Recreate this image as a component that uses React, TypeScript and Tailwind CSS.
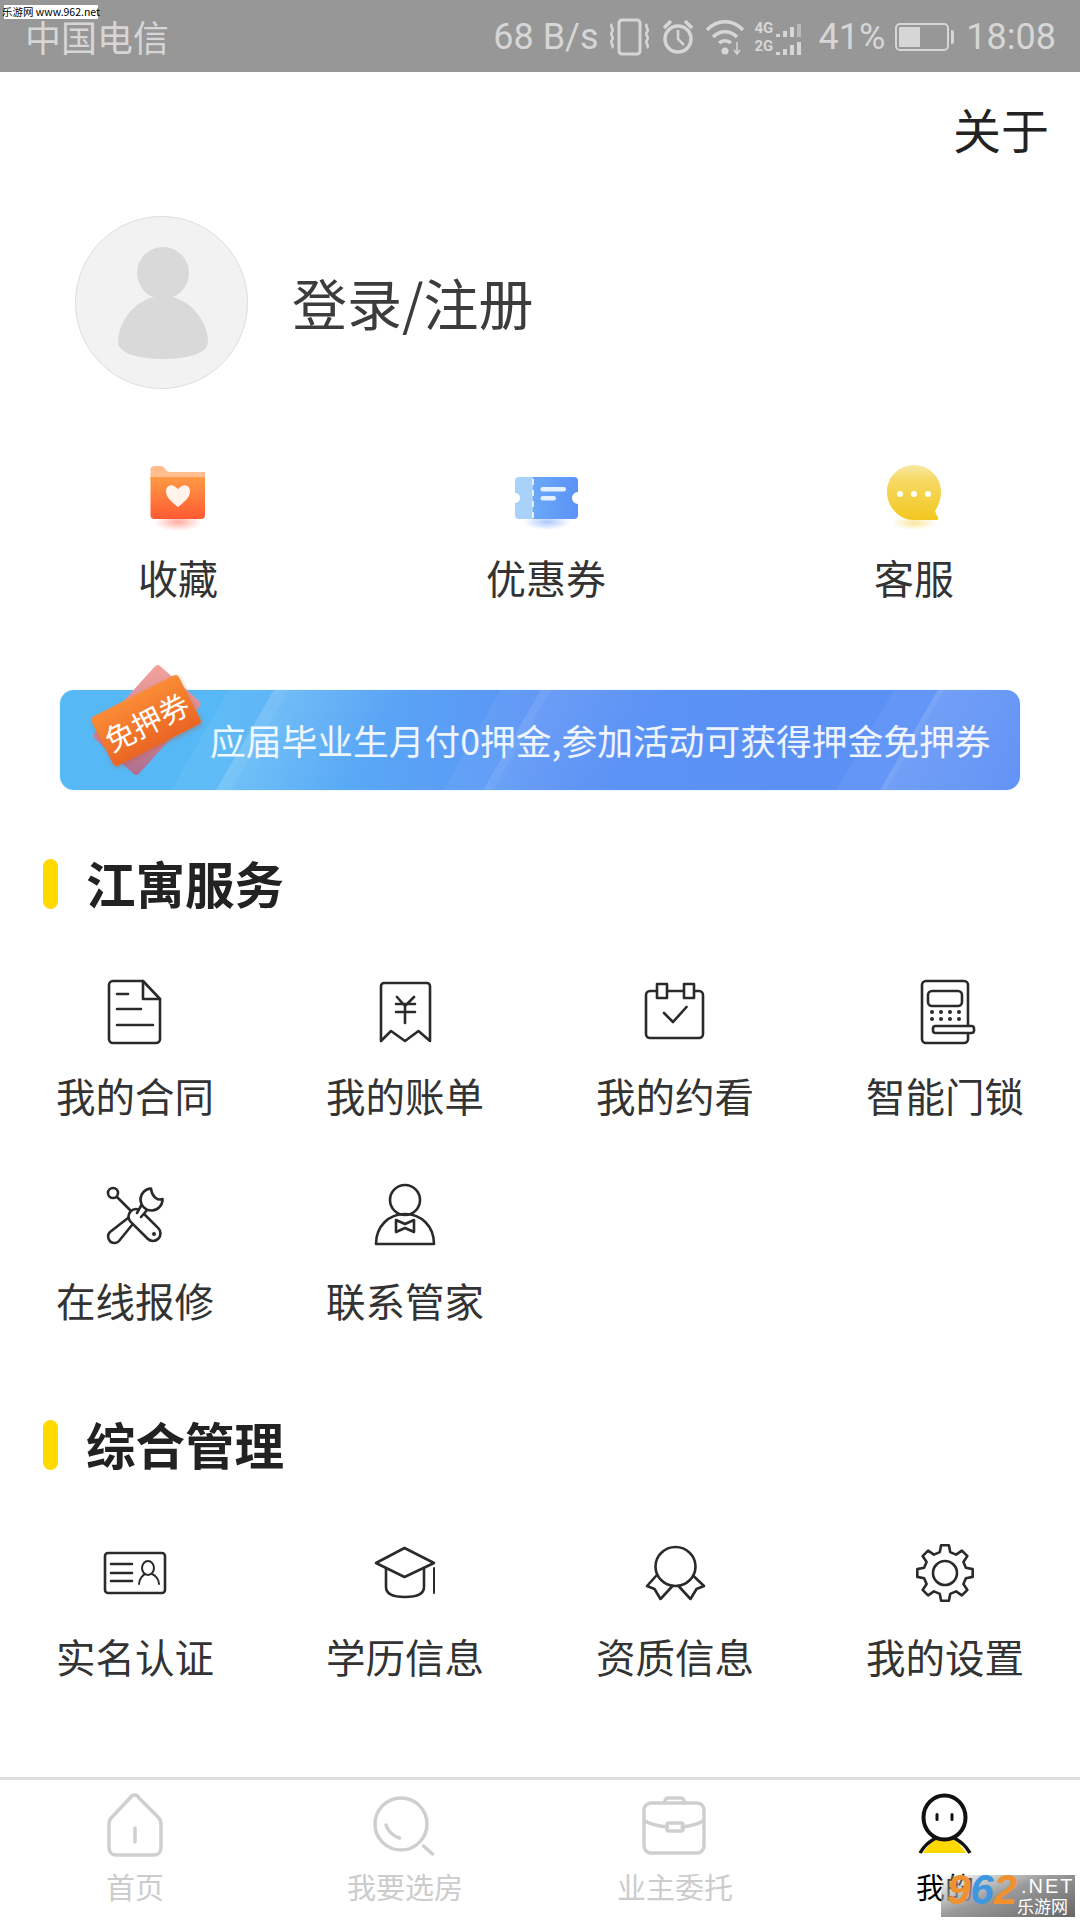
const cjk = "font-['Noto_Sans_CJK_SC','Roboto',sans-serif]";

const gearPath = () => {
  const pts: string[] = [];
  for (let i = 0; i < 8; i++) {
    const a = i * 45 - 90;
    const list: [number, number][] = [
      [21.5, a - 14],
      [28, a - 8],
      [28, a + 8],
      [21.5, a + 14],
    ];
    list.forEach(([r, deg]) => {
      const rad = (deg * Math.PI) / 180;
      pts.push(`${(35 + r * Math.cos(rad)).toFixed(1)} ${(32 + r * Math.sin(rad)).toFixed(1)}`);
    });
  }
  return `M${pts.join("L")}Z`;
};

const Line = ({ children, viewBox = "0 0 70 70" }: { children: React.ReactNode; viewBox?: string }) => (
  <svg width="70" height="70" viewBox={viewBox} fill="none" stroke="#2a2a2a" strokeWidth="2.6" strokeLinejoin="round" strokeLinecap="round">
    {children}
  </svg>
);

const icons: Record<string, React.ReactNode> = {
  contract: (
    <Line>
      <path d="M13 4H43L60 22V62a4 4 0 0 1-4 4H13a4 4 0 0 1-4-4V8a4 4 0 0 1 4-4Z" />
      <path d="M43 4V22H60M17 17H28M17 32H41M17 48H53" />
    </Line>
  ),
  bill: (
    <Line>
      <path d="M11 64V9a3 3 0 0 1 3-3H57a3 3 0 0 1 3 3V64L48.5 54L35 64L21 54Z" />
      <path d="M27 20L35 29L44 20M26 27H45M26 35H45M35 29V46" />
    </Line>
  ),
  calendar: (
    <Line>
      <rect x="6" y="14" width="57" height="47" rx="4" />
      <rect x="17" y="7" width="10" height="14" fill="#fff" />
      <rect x="44" y="7" width="10" height="14" fill="#fff" />
      <path d="M24 36L33 45L46.5 30" />
    </Line>
  ),
  lock: (
    <Line>
      <path d="M16 4H54a4 4 0 0 1 4 4V62a4 4 0 0 1-4 4H16a4 4 0 0 1-4-4V8a4 4 0 0 1 4-4Z" />
      <rect x="18" y="14" width="34" height="15" rx="4" />
      <g fill="#2a2a2a" stroke="none">
        <circle cx="22" cy="35" r="2" />
        <circle cx="31" cy="35" r="2" />
        <circle cx="40" cy="35" r="2" />
        <circle cx="49" cy="35" r="2" />
        <circle cx="22" cy="42" r="2" />
        <circle cx="31" cy="42" r="2" />
        <circle cx="40" cy="42" r="2" />
        <circle cx="49" cy="42" r="2" />
      </g>
      <rect x="23" y="49" width="41" height="7" rx="2.5" fill="#fff" />
    </Line>
  ),
  repair: (
    <Line>
      <circle cx="13" cy="11" r="5" />
      <path d="M17 15L30 28" />
      <path d="M28 36L10 50a6.500 6.500 0 0 0 5 11a6 6 0 0 0 4-2L32 43" />
      <rect x="25" y="35.500" width="39" height="15" rx="7.500" transform="rotate(45 44.500 43)" fill="#fff" />
      <path d="M37 31L42 22L48 27L41 35" fill="#fff" />
      <path d="M51 6.500A11 11 0 1 0 62.500 17C58 19 52 15 51 6.500Z" fill="#fff" />
      <circle cx="54" cy="52" r="2" fill="#2a2a2a" stroke="none" />
    </Line>
  ),
  butler: (
    <Line>
      <circle cx="35" cy="18" r="15" />
      <path d="M6 62C6 44 19 32 35 32C51 32 64 44 64 62Z" />
      <path d="M26 38L35 42L44 38V50L35 46L26 50Z" />
    </Line>
  ),
  idcard: (
    <Line viewBox="0 -3 70 70">
      <rect x="5" y="12" width="60" height="40" rx="3" />
      <path d="M11 23H32M11 32H32M11 40H32" />
      <ellipse cx="48" cy="27" rx="6" ry="7" strokeWidth="2" />
      <path d="M39 43C39 38 43 34 45 33M59 43C59 38 55 34 52 33" strokeWidth="2" />
    </Line>
  ),
  cap: (
    <Line viewBox="0 -3 70 70">
      <path d="M34.500 7L64 22L34.500 36L6 22Z" />
      <path d="M16 27V46C16 53 24 56 35 56C46 56 54 53 54 46V27" />
      <path d="M64 27V52" strokeWidth="2" />
    </Line>
  ),
  medal: (
    <Line viewBox="0 -3 70 70">
      <ellipse cx="35.500" cy="25.500" rx="20" ry="19.500" />
      <path d="M16 35L7 45L14.500 48L20.500 58L32.500 45" />
      <path d="M53.500 35L64 45L56.500 48L50.500 58L38.500 45" />
    </Line>
  ),
  gear: (
    <Line viewBox="0 -3 70 70">
      <path d={gearPath()} />
      <circle cx="35" cy="32" r="12" />
    </Line>
  ),
};

const services = [
  { key: "contract", label: "我的合同" },
  { key: "bill", label: "我的账单" },
  { key: "calendar", label: "我的约看" },
  { key: "lock", label: "智能门锁" },
  { key: "repair", label: "在线报修" },
  { key: "butler", label: "联系管家" },
];

const manage = [
  { key: "idcard", label: "实名认证" },
  { key: "cap", label: "学历信息" },
  { key: "medal", label: "资质信息" },
  { key: "gear", label: "我的设置" },
];

const FolderIcon = () => (
  <svg width="90" height="80" viewBox="0 0 90 80">
    <defs>
      <linearGradient id="folderBody" x1="0" y1="0" x2="0" y2="1">
        <stop offset="0" stopColor="#ff9a45" />
        <stop offset="1" stopColor="#ff5a32" />
      </linearGradient>
      <radialGradient id="folderShadow">
        <stop offset="0" stopColor="#ff6a50" stopOpacity="0.55" />
        <stop offset="1" stopColor="#ff6a50" stopOpacity="0" />
      </radialGradient>
    </defs>
    <ellipse cx="45" cy="62" rx="24" ry="9" fill="url(#folderShadow)" />
    <path d="M17.500 10a4 4 0 0 1 4-4H28C32 6 33 12 36 12H72V20H17.500Z" fill="#ffbd90" />
    <path d="M17.500 17H72V55a4 4 0 0 1-4 4H21.500a4 4 0 0 1-4-4Z" fill="url(#folderBody)" />
    <path d="M45 47C36 40 33 36 33 31C33 26 38 24 41 26C43 27 45 29 45 29C45 29 47 27 49 26C52 24 57 26 57 31C57 36 54 40 45 47Z" fill="#fff3ec" />
  </svg>
);

const TicketIcon = () => (
  <svg width="90" height="80" viewBox="0 0 90 80">
    <defs>
      <linearGradient id="ticketBody" x1="0" y1="0" x2="1" y2="0">
        <stop offset="0" stopColor="#6aa8f6" />
        <stop offset="1" stopColor="#5b93f8" />
      </linearGradient>
      <radialGradient id="ticketShadow">
        <stop offset="0" stopColor="#5b8ff5" stopOpacity="0.5" />
        <stop offset="1" stopColor="#5b8ff5" stopOpacity="0" />
      </radialGradient>
    </defs>
    <ellipse cx="46" cy="62" rx="24" ry="8" fill="url(#ticketShadow)" />
    <path d="M18 17H32V59H18a4 4 0 0 1-4-4V43a5 5 0 0 0 0-10V21a4 4 0 0 1 4-4Z" fill="#a9d2fb" />
    <path d="M32 17H73a4 4 0 0 1 4 4V32a6 6 0 0 0 0 12V55a4 4 0 0 1-4 4H32Z" fill="url(#ticketBody)" />
    <path d="M32 19V59" stroke="#fff" strokeWidth="1.500" strokeDasharray="6 5" />
    <rect x="39.500" y="27" width="25.500" height="4.500" rx="2.200" fill="#e6f0ff" />
    <rect x="39.500" y="36" width="15.500" height="4.500" rx="2.200" fill="#e6f0ff" />
  </svg>
);

const ChatIcon = () => (
  <svg width="90" height="80" viewBox="0 0 90 80">
    <defs>
      <linearGradient id="chatBody" x1="0" y1="0" x2="0" y2="1">
        <stop offset="0" stopColor="#fae8a5" />
        <stop offset="0.25" stopColor="#f6da66" />
        <stop offset="1" stopColor="#f2c71f" />
      </linearGradient>
      <radialGradient id="chatShadow">
        <stop offset="0" stopColor="#f2c71f" stopOpacity="0.45" />
        <stop offset="1" stopColor="#f2c71f" stopOpacity="0" />
      </radialGradient>
    </defs>
    <ellipse cx="45" cy="63" rx="22" ry="7" fill="url(#chatShadow)" />
    <path d="M45 5C60 5 72 17 72 32C72 39 70 45 66 51C67 54 68 56 69 57C70 59 69 60 67 60H45C30 60 18 47 18 32C18 17 30 5 45 5Z" fill="url(#chatBody)" />
    <circle cx="31" cy="34" r="3" fill="#fff" />
    <circle cx="45" cy="34" r="3" fill="#fff" />
    <circle cx="59" cy="34" r="3" fill="#fff" />
  </svg>
);

const SectionTitle = ({ title }: { title: string }) => (
  <div className="flex h-[50px] items-center pl-[43px]">
    <div className="h-[50px] w-[15px] rounded-full bg-[#ffd900]" />
    <h3 className="ml-[28px] pb-[3px] text-[49.500px] leading-[50px] font-bold text-[#222222]">{title}</h3>
  </div>
);

const ServiceGrid = ({ items }: { items: { key: string; label: string }[] }) => (
  <div className="grid grid-cols-4 gap-y-[59px]">
    {items.map((el) => (
      <div key={el.key} className="flex flex-col items-center">
        {icons[el.key]}
        <span className="mt-[20px] text-[39.500px] leading-[56px] whitespace-nowrap text-[#333333]">{el.label}</span>
      </div>
    ))}
  </div>
);

const StatusBar = () => (
  <div className="relative flex h-[72px] items-center bg-[#979797] pr-[24px] pl-[25px] text-[#d6d6d6]">
    <span className="text-[36px] leading-[72px]">中国电信</span>
    <div className="ml-auto flex items-center pt-[2px] font-['Roboto',sans-serif] text-[36px] leading-[70px]">
      <span>68 B/s</span>
      <svg className="ml-[8px]" width="45" height="40" viewBox="0 0 45 40" fill="none" stroke="#d6d6d6" strokeWidth="3">
        <rect x="12" y="3" width="21" height="34" rx="3" />
        <path d="M5 7c-3 3 3 5 0 8s3 5 0 8s3 5 0 8M40 7c-3 3 3 5 0 8s3 5 0 8s3 5 0 8" strokeWidth="2.500" />
      </svg>
      <svg className="ml-[10px]" width="32" height="36" viewBox="0 0 32 36" fill="none" stroke="#d6d6d6" strokeWidth="3.500">
        <circle cx="16" cy="20" r="13" />
        <path d="M16 11V20L22 26" strokeWidth="2.500" />
        <path d="M2 9L9 2M30 9L23 2" strokeWidth="3.500" />
      </svg>
      <svg className="ml-[11px]" width="42" height="38" viewBox="0 0 42 38" fill="none" stroke="#d6d6d6" strokeWidth="3.500">
        <path d="M2 12C12 1 28 1 38 12M8 19C15 12 25 12 32 19M14 25C17 22 23 22 26 25" />
        <circle cx="20" cy="33" r="3.500" fill="#d6d6d6" stroke="none" />
        <path d="M32 24V36M29 32L32 36L35 32" strokeWidth="1.500" />
      </svg>
      <div className="ml-[8px] flex w-[59px] flex-col font-['Roboto',sans-serif] text-[15px] leading-[18px] font-bold">
        <div className="flex items-end gap-[3px]">
          <span>4G</span>
          <span className="h-[3px] w-[4px] bg-[#d6d6d6]" />
          <span className="h-[6px] w-[4px] bg-[#d6d6d6]" />
          <span className="h-[10px] w-[4px] bg-[#d6d6d6]" />
          <span className="h-[13px] w-[4px] bg-[#bbbbbb]" />
        </div>
        <div className="flex items-end gap-[3px]">
          <span>2G</span>
          <span className="h-[3px] w-[4px] bg-[#d6d6d6]" />
          <span className="h-[6px] w-[4px] bg-[#d6d6d6]" />
          <span className="h-[10px] w-[4px] bg-[#d6d6d6]" />
          <span className="h-[13px] w-[4px] bg-[#d6d6d6]" />
        </div>
      </div>
      <span className="ml-[5px]">41%</span>
      <div className="ml-[10px] flex items-center">
        <div className="flex h-[28px] w-[54px] rounded-[5px] border-2 border-[#d6d6d6] p-[2px]">
          <div className="h-full w-[21px] rounded-[1px] bg-[#d6d6d6]" />
        </div>
        <div className="ml-[2px] h-[14px] w-[3px] rounded-r-[2px] bg-[#d6d6d6]" />
      </div>
      <span className="ml-[12px]">18:08</span>
    </div>
    <div className="absolute top-[5px] left-[4px] flex h-[14px] w-[94px] items-center justify-center bg-white text-[10.500px] whitespace-nowrap text-black">
      乐游网 www.962.net
    </div>
  </div>
);

const Banner = () => (
  <div className="relative mx-[60px] mt-[85px] h-[100px]">
    <div className="relative flex h-full items-center overflow-hidden rounded-[14px] bg-[linear-gradient(90deg,#57b8f6_0%,#57b8f6_16%,#5b93f5_50%,#5b8ff5_100%)] pl-[150px] shadow-[0_0_2px_#cfe8fb]">
      <div className="absolute top-0 left-[140px] h-full w-[60px] -skew-x-[30deg] bg-white/5" />
      <div className="absolute top-0 left-[185px] h-full w-[130px] -skew-x-[30deg] bg-[linear-gradient(90deg,rgba(255,255,255,0.16),rgba(255,255,255,0))]" />
      <div className="absolute top-0 left-[412px] h-full w-[50px] -skew-x-[30deg] bg-white/5" />
      <div className="absolute top-0 left-[452px] h-full w-[130px] -skew-x-[30deg] bg-[linear-gradient(90deg,rgba(255,255,255,0.1),rgba(255,255,255,0))]" />
      <div className="absolute top-0 left-[805px] h-full w-[50px] -skew-x-[30deg] bg-white/5" />
      <div className="absolute top-0 left-[849px] h-full w-[170px] -skew-x-[30deg] bg-[linear-gradient(90deg,rgba(255,255,255,0.14),rgba(255,255,255,0.02))]" />
      <span className="relative text-[35.750px] leading-[50px] whitespace-nowrap text-white/90">
        应届毕业生月付0押金,参加活动可获得押金免押券
      </span>
    </div>
    <div className="absolute top-0 left-[38px] h-[60px] w-[98px] -rotate-[48deg] rounded-[4px] bg-[linear-gradient(48deg,#ad6f90,#f5a39b)]" />
    <div className="absolute top-[3px] left-[37px] flex h-[55px] w-[98px] -rotate-[27deg] items-center justify-center rounded-[4px] bg-[linear-gradient(180deg,#fa8c36,#ea6523)] text-[30px] leading-[36px] whitespace-nowrap text-white shadow-[0_2px_4px_rgba(200,80,40,0.4)]">
      免押券
    </div>
  </div>
);

const tabs = [
  {
    label: "首页",
    icon: (
      <path d="M30 8C32 4 37 4 39 8L58 27C60 29 61 31 61 34V58C61 62 58 65 54 65H16C12 65 9 62 9 58V34C9 31 10 29 12 27ZM35 38V52" />
    ),
  },
  {
    label: "我要选房",
    icon: (
      <>
        <circle cx="31" cy="34" r="26" />
        <path d="M16 35C18 41 23 46 29.500 48M53.500 56L62.500 64" />
      </>
    ),
  },
  {
    label: "业主委托",
    icon: (
      <>
        <rect x="4" y="13" width="60" height="50" rx="7" />
        <path d="M25 13V11a3 3 0 0 1 3-3H41a3 3 0 0 1 3 3V13M5 31C10 34 18 36 27 37M42 37C50 36 58 34 63 31" />
        <rect x="27" y="33" width="16" height="8" rx="2" />
      </>
    ),
  },
];

const TabBar = () => (
  <div className="relative mt-auto grid h-[143px] grid-cols-4 border-t-[3px] border-[#dddddd] pt-[10px]">
    {tabs.map((el) => (
      <div key={el.label} className="flex flex-col items-center">
        <svg width="70" height="70" viewBox="0 0 70 70" fill="none" stroke="#cfcfcf" strokeWidth="3.500" strokeLinecap="round" strokeLinejoin="round">
          {el.icon}
        </svg>
        <span className="mt-[6px] text-[29px] leading-[40px] whitespace-nowrap text-[#cccccc]">{el.label}</span>
      </div>
    ))}
    <div className="flex flex-col items-center">
      <svg width="70" height="70" viewBox="0 0 70 70" fill="none" stroke="#111111" strokeWidth="4">
        <path d="M13 63C17 56 22 51 28 48H41C47 51 52 56 56 63Z" fill="#ffd800" stroke="none" />
        <path d="M10 63C14 56 20 51 26 48M60 63C56 56 50 51 44 48" strokeWidth="3.500" />
        <ellipse cx="34.500" cy="27.500" rx="21" ry="22" fill="#fff" />
        <rect x="25.500" y="23" width="3" height="8" rx="1.500" fill="#111111" stroke="none" />
        <rect x="40.500" y="23" width="3" height="8" rx="1.500" fill="#111111" stroke="none" />
      </svg>
      <span className="mt-[6px] text-[29px] leading-[40px] whitespace-nowrap text-black">我的</span>
    </div>
    {/* watermark over the last tab */}
    <div className="absolute top-[95px] left-[941px] h-[42px] w-[134px] bg-[linear-gradient(160deg,rgba(255,255,255,0.2),#9a9a9a_45%,#666666)]">
      <span className="absolute top-[-9px] left-[6px] font-['Liberation_Sans',sans-serif] text-[42px] leading-[48px] font-bold text-[#f0902e] italic">
        9<span className="text-[#3f97e0]">6</span>2
      </span>
      <span className="absolute top-[0px] left-[80px] font-['Liberation_Sans',sans-serif] text-[20px] leading-[22px] tracking-[2px] text-white">
        .NET
      </span>
      <span className="absolute top-[20px] left-[76px] text-[17px] leading-[21px] whitespace-nowrap text-white">乐游网</span>
    </div>
  </div>
);

const App = () => {
  return (
    <div className={`flex h-[1920px] w-[1080px] flex-col overflow-hidden bg-white ${cjk}`}>
      <StatusBar />
      <div className="flex h-[112px] items-center justify-end pr-[31px]">
        <span className="text-[48px] leading-[60px] text-[#222222]">关于</span>
      </div>
      <div className="mt-[32px] flex items-center pl-[75px]">
        <div className="h-[173px] w-[173px] rounded-full border border-[#dddddd] bg-[#f2f2f2]">
          <svg width="171" height="171" viewBox="0 0 171 171" fill="#d9d9d9">
            <circle cx="87" cy="56" r="26" />
            <path d="M87 79C60 79 42 105 42 125C42 137 65 142 87 142C109 142 132 137 132 125C132 105 114 79 87 79Z" />
          </svg>
        </div>
        <span className="ml-[44px] pb-[4px] text-[55px] leading-[70px] text-[#3c3c3c]">登录/注册</span>
      </div>
      <div className="mt-[71px] ml-[-6px] grid grid-cols-[368px_368px_368px]">
        {[
          { label: "收藏", icon: <FolderIcon /> },
          { label: "优惠券", icon: <TicketIcon /> },
          { label: "客服", icon: <ChatIcon /> },
        ].map((el) => (
          <div key={el.label} className="flex flex-col items-center">
            {el.icon}
            <span className="mt-[9px] text-[40px] leading-[56px] text-[#333333]">{el.label}</span>
          </div>
        ))}
      </div>
      <Banner />
      <div className="mt-[69px]">
        <SectionTitle title="江寓服务" />
      </div>
      <div className="mt-[68px]">
        <ServiceGrid items={services} />
      </div>
      <div className="mt-[92px]">
        <SectionTitle title="综合管理" />
      </div>
      <div className="mt-[68px]">
        <ServiceGrid items={manage} />
      </div>
      <TabBar />
    </div>
  );
};

export default App;
